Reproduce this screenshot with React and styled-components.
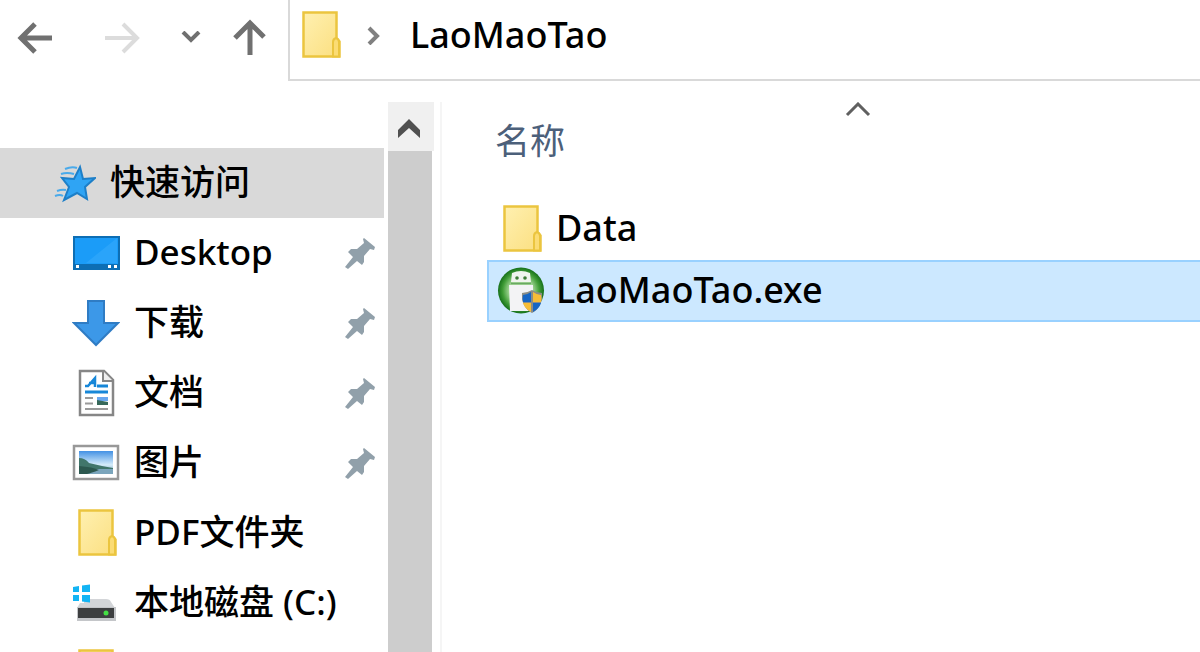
import React, { useState } from "react";
import styled, { createGlobalStyle } from "styled-components";

const quickAccess = [
  { name: "Desktop", icon: DesktopIcon, pinned: true },
  { name: "下载", icon: DownloadIcon, pinned: true },
  { name: "文档", icon: DocumentIcon, pinned: true },
  { name: "图片", icon: PictureIcon, pinned: true },
  { name: "PDF文件夹", icon: FolderIcon },
  { name: "本地磁盘 (C:)", icon: DiskIcon },
  { name: "", icon: FolderIcon },
];

const files = [
  { name: "Data", icon: FolderIcon },
  { name: "LaoMaoTao.exe", icon: AppIcon },
];

export default function App() {
  const [selected, setSelected] = useState("LaoMaoTao.exe");

  return (
    <Window>
      <GlobalStyle />
      <Toolbar>
        <IconButton aria-label="后退">
          <svg width="38" height="34" fill="none" stroke="#707070" strokeWidth="5">
            <path d="M36 17H6M19 3L5 17l14 14" />
          </svg>
        </IconButton>
        <IconButton aria-label="前进" disabled>
          <svg width="38" height="34" fill="none" stroke="#dcdcdc" strokeWidth="4">
            <path d="M2 17h31M20 3l14 14-14 14" />
          </svg>
        </IconButton>
        <IconButton aria-label="最近浏览的位置">
          <svg width="20" height="14" fill="none" stroke="#707070" strokeWidth="4">
            <path d="M2 1l8 8 8-8" />
          </svg>
        </IconButton>
        <IconButton aria-label="向上">
          <svg width="36" height="38" fill="none" stroke="#707070" strokeWidth="5">
            <path d="M20 36V5M5 19L20 4l14 14" />
          </svg>
        </IconButton>
        <AddressBar aria-label="地址">
          <FolderIcon />
          <svg width="16" height="20" fill="none" stroke="#808080" strokeWidth="4">
            <path d="M3 3l8 8-8 8" />
          </svg>
          <Crumb>LaoMaoTao</Crumb>
        </AddressBar>
      </Toolbar>

      <Body>
        <Sidebar>
          <TreeItem $root>
            <StarIcon />
            <Label>快速访问</Label>
          </TreeItem>
          {quickAccess.map(({ name, icon: Icon, pinned }) => (
            <TreeItem key={name} aria-label={name || "文件夹"}>
              <Icon />
              <Label>{name}</Label>
              {pinned && <PinIcon />}
            </TreeItem>
          ))}
        </Sidebar>

        <ScrollBar>
          <ScrollButton aria-label="向上滚动">
            <svg width="24" height="20">
              <path d="M12 0l11 11v8L12 9 1 19v-8z" fill="#505050" />
            </svg>
          </ScrollButton>
          <Thumb />
        </ScrollBar>

        <FilePane>
          <FileTable>
            <thead>
              <tr>
                <HeadCell aria-sort="ascending">
                  <SortMark>
                    <svg width="26" height="16" fill="none" stroke="#606060" strokeWidth="3">
                      <path d="M2 13L13 2l11 11" />
                    </svg>
                  </SortMark>
                  <SortButton>名称</SortButton>
                </HeadCell>
              </tr>
            </thead>
            <tbody>
              {files.map(({ name, icon: Icon }) => (
                <tr key={name}>
                  <FileCell>
                    <FileButton
                      $selected={name === selected}
                      onClick={() => setSelected(name)}
                    >
                      <Icon />
                      <Label>{name}</Label>
                    </FileButton>
                  </FileCell>
                </tr>
              ))}
            </tbody>
          </FileTable>
        </FilePane>
      </Body>
    </Window>
  );
}

function FolderIcon() {
  return (
    <svg width="48" height="48" viewBox="0 0 48 48">
      <defs>
        <linearGradient id="folder" x1="0" y1="0" x2="1" y2="1">
          <stop offset="0" stopColor="#fff0b0" />
          <stop offset="1" stopColor="#fbdf80" />
        </linearGradient>
      </defs>
      <path d="M7.500 1.500h33v26l3 3v15h-36z" fill="url(#folder)" stroke="#ebc53f" strokeWidth="2.500" />
      <path d="M37 45.500V31q0-3 3-4 3 1 3 4v14.500z" fill="#fbdc74" stroke="#ebc53f" strokeWidth="2" />
    </svg>
  );
}

function StarIcon() {
  return (
    <svg width="42" height="40" viewBox="0 0 42 40">
      <path
        d="M26 4l3 12 12-1-10 9 2 12-10-6-13 7 5-13-7-9 12 1z"
        fill="#2fa4f4"
        stroke="#1d7fc8"
        strokeWidth="2"
      />
      <path d="M11 6q7-3 12-1M7 11q6-2 13 0M3 28q5-2 9-1M1 33q5-2 8 0" fill="none" stroke="#4aaaea" strokeWidth="2" />
    </svg>
  );
}

function DesktopIcon() {
  return (
    <svg width="48" height="48" viewBox="0 0 48 48">
      <rect x="2" y="8" width="45" height="32" fill="#1b9cf8" stroke="#0d6eb4" strokeWidth="2" />
      <path d="M45 9v25H14z" fill="#2aa4fa" />
      <path d="M2 37.500h45" stroke="#0d6eb4" strokeWidth="5" />
      <path d="M4 37.500h3M36 37.500h3M42 37.500h3" stroke="#fff" strokeWidth="3" />
    </svg>
  );
}

function DownloadIcon() {
  return (
    <svg width="48" height="48" viewBox="0 0 48 48">
      <path d="M16 2h16v22h14L24 46 2 24h14z" fill="#3c98e8" stroke="#2f7cc4" strokeWidth="2" />
    </svg>
  );
}

function DocumentIcon() {
  return (
    <svg width="48" height="48" viewBox="0 0 48 48" fill="none">
      <path d="M8 2h24l9 9v35H8z" fill="#fff" stroke="#868686" strokeWidth="2.500" />
      <path d="M31 2v10h10" fill="#eee" stroke="#868686" strokeWidth="2" />
      <path d="M13 17h3l7-8v9M17 14h6" stroke="#1787d8" strokeWidth="2.500" />
      <path d="M25 17h11M13 23h23" stroke="#1787d8" strokeWidth="3" />
      <path d="M13 29h8M13 34.500h8M13 40h23" stroke="#9a9a9a" strokeWidth="2" />
      <path d="M25 28h11v4H25z" fill="#68a7ef" />
      <path d="M25 31l11 2v3H25z" fill="#37695a" />
    </svg>
  );
}

function PictureIcon() {
  return (
    <svg width="48" height="48" viewBox="0 0 48 48">
      <defs>
        <linearGradient id="sky" x1="0" y1="0" x2="0" y2="1">
          <stop offset="0" stopColor="#4391e4" />
          <stop offset=".6" stopColor="#d5ecfa" />
          <stop offset="1" stopColor="#6d9fb8" />
        </linearGradient>
      </defs>
      <rect x="2" y="7" width="44" height="33" fill="#fff" stroke="#989898" strokeWidth="2.500" />
      <rect x="7" y="12" width="34" height="23" fill="url(#sky)" />
      <path d="M7 19q6 0 10 5l13 3 11 2v1H7z" fill="#41766b" />
      <path d="M7 30h34v5H7z" fill="#7ba5bc" />
      <path d="M7 27q14 1 20 4-8 3-12 4H7z" fill="#2c584f" />
    </svg>
  );
}

function DiskIcon() {
  return (
    <svg width="48" height="48" viewBox="0 0 48 48">
      <path d="M12 20h22q4 0 5 3l4 6H5l3-5h4z" fill="#d3d5d8" />
      <path d="M1 8l6-1v6H1zM10 6.500l8-1V13h-8zM1 16h6v6H1zM10 16h8v7.500l-8-1z" fill="#12b4f4" />
      <rect x="5" y="28" width="39" height="14" fill="#c4c6c9" />
      <rect x="6" y="29" width="36" height="10" fill="#3d3f40" />
      <circle cx="34" cy="34" r="2.500" fill="#44e044" />
    </svg>
  );
}

function PinIcon() {
  return (
    <svg width="32" height="32" viewBox="0 0 32 32" fill="#91a0aa">
      <path d="M20 1l11 9-1 3-4-1-6 7v6l-2 3-5-4-9 8-3-2 8-10-5-5 3-3h6l7-6-1-4z" />
    </svg>
  );
}

function AppIcon() {
  return (
    <svg width="48" height="48" viewBox="0 0 48 48">
      <defs>
        <radialGradient id="green">
          <stop offset=".5" stopColor="#a6d89a" />
          <stop offset=".8" stopColor="#3f9c36" />
          <stop offset="1" stopColor="#16701a" />
        </radialGradient>
      </defs>
      <circle cx="24" cy="23.500" r="23" fill="url(#green)" />
      <path d="M15 6q9-4 18 0l1 9H14z" fill="#f0f4ee" />
      <path d="M14 16.500h20" stroke="#6aa862" strokeWidth="1.500" />
      <circle cx="20" cy="11" r="1.800" fill="#3d7d36" />
      <circle cx="28" cy="11" r="1.800" fill="#3d7d36" />
      <path d="M12 18h24v26H13z" fill="#f3f3f5" />
      <path d="M35 23q5 3 10 3 1 14-10 20-11-6-10-20 5 0 10-3z" fill="#8b8d86" />
      <path d="M34 25v10h-8q-1-3 0-7 4 0 8-3zM36 36h8q-2 6-8 9z" fill="#1766c4" />
      <path d="M36 25q4 3 8 3 1 4 0 7h-8zM26 36h8v9q-6-3-8-9z" fill="#f7bd37" />
    </svg>
  );
}

const GlobalStyle = createGlobalStyle`
  * {
    box-sizing: border-box;
  }
  body {
    margin: 0;
    background: #fff;
    color: #000;
    font: 500 35px/40px "Noto Sans", "Noto Sans CJK SC", sans-serif;
  }
  button {
    padding: 0;
    border: 0;
    background: none;
    color: inherit;
    font: inherit;
  }
  svg {
    display: block;
    flex: none;
  }
`;

const Window = styled.div`
  height: 100vh;
  display: flex;
  flex-direction: column;
  overflow: hidden;
`;

const Toolbar = styled.header`
  display: grid;
  grid-template-columns: 70px 104px 34px 80px 1fr;
  padding-bottom: 21px;
`;

const IconButton = styled.button`
  display: flex;
  align-items: center;
  justify-content: center;
  padding-bottom: 5px;
`;

const AddressBar = styled.nav`
  display: flex;
  align-items: center;
  height: 81px;
  padding: 0 6px 10px;
  border: solid #d9d9d9;
  border-width: 0 0 2px 2px;

  > svg + svg {
    margin-left: 22px;
  }
`;

const Crumb = styled.button`
  margin-left: 28px;
  font-size: 36px;
`;

const Body = styled.div`
  flex: 1;
  min-height: 0;
  display: flex;
`;

const Sidebar = styled.nav`
  flex: none;
  width: 384px;
  padding-top: 46px;
  overflow: hidden;
`;

const TreeItem = styled.button`
  display: flex;
  align-items: center;
  gap: 14px;
  width: 100%;
  height: 70px;
  padding: 0 8px 0 ${({ $root }) => ($root ? 54 : 72)}px;
  background: ${({ $root }) => ($root ? "#d9d9d9" : "none")};
  text-align: left;
`;

const Label = styled.span`
  flex: 1;
  padding-bottom: 2px;
  white-space: nowrap;
`;

const ScrollBar = styled.div`
  flex: none;
  display: flex;
  flex-direction: column;
  width: 46px;
  margin-left: 4px;
`;

const ScrollButton = styled.button`
  display: flex;
  align-items: center;
  justify-content: center;
  height: 49px;
  padding: 4px 4px 0 0;
  background: #f0f0f0;
`;

const Thumb = styled.div`
  flex: 1;
  width: 44px;
  background: #cdcdcd;
`;

const FilePane = styled.main`
  flex: 1;
  min-width: 0;
  margin-left: 6px;
  padding-left: 45px;
  border-left: 2px solid #f5f5f5;
  overflow: hidden;
`;

/* the name column runs a little past the window edge */
const FileTable = styled.table`
  width: calc(100% + 28px);
  border-collapse: collapse;
`;

const HeadCell = styled.th`
  height: 96px;
  padding: 0;
  vertical-align: top;
  text-align: left;
  font-weight: normal;
  color: #4c607a;
`;

const SortMark = styled.div`
  display: flex;
  justify-content: center;
  height: 19px;
`;

const SortButton = styled.button`
  display: block;
  padding-left: 8px;
`;

const FileCell = styled.td`
  padding: 0;
`;

const FileButton = styled.button`
  display: flex;
  align-items: center;
  gap: 11px;
  width: 100%;
  height: 62px;
  padding-left: 8px;
  border: 2px solid ${({ $selected }) => ($selected ? "#99d1ff" : "transparent")};
  background: ${({ $selected }) => ($selected ? "#cce8ff" : "none")};
  font-size: 36px;
  text-align: left;
`;
